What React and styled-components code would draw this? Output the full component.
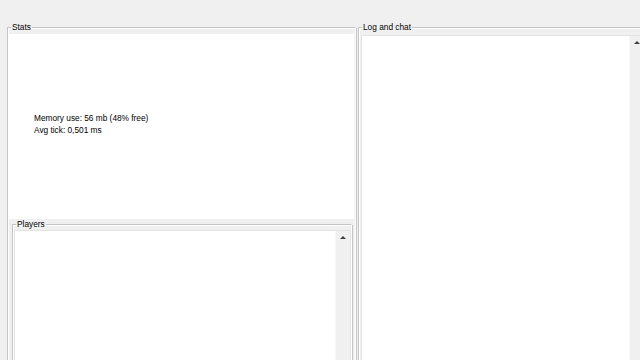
import React from "react";
import styled, { createGlobalStyle } from "styled-components";

const Global = createGlobalStyle`
  html, body { margin: 0; padding: 0; background: #f0f0f0; overflow: hidden; }
  body { font-family: "Liberation Sans", Arial, sans-serif; font-size: 8.3px; color: #000; }
`;

const Page = styled.div`
  display: flex;
  align-items: flex-start;
  gap: 2px;
  width: 660px;
  height: 360px;
  padding: 23px 0 0 7px;
  box-sizing: border-box;
  overflow: hidden;
`;

const Group = styled.fieldset`
  margin: 0;
  padding: 0;
  border-style: solid;
  border-width: 1px;
  border-color: #c4c4c4 #ffffff #ffffff #c4c4c4;
  box-shadow: inset 1px 1px #ffffff, 1px 1px #c4c4c4;
  width: ${(p) => p.$w}px;
  height: ${(p) => p.$h}px;
  box-sizing: border-box;
  min-width: 0;
  display: flex;
  flex-direction: column;
`;

const Legend = styled.legend`
  padding: 0 1px;
  margin-left: 3px;
  font-size: 8.3px;
  line-height: 8px;
  color: #000;
`;

const StatsPanel = styled.div`
  background: #ffffff;
  height: 185px;
  margin: 3px 1px 0 1px;
  display: flex;
  flex-direction: column;
  justify-content: center;
  padding: 0 0 6px 25px;
  box-sizing: border-box;
  line-height: 12px;
`;

const StatLine = styled.div`
  white-space: nowrap;
`;

const PlayersWrap = styled.div`
  padding: 0 3px 0 4px;
  margin-top: 1px;
`;

const ListBox = styled.div`
  display: flex;
  margin: ${(p) => p.$m};
  height: ${(p) => p.$h}px;
  width: ${(p) => (p.$w ? `${p.$w}px` : "auto")};
  border: 1px solid #e3e3e3;
  background: #fff;
`;

const ListArea = styled.div`
  flex: 1;
  background: #fff;
`;

const ScrollBar = styled.div`
  width: ${(p) => p.$w || 14}px;
  background: #f0f0f0;
  border-left: 1px solid #f7f7f7;
  display: flex;
  justify-content: center;
  padding-top: 5px;
  box-sizing: border-box;
`;

const Arrow = styled.div`
  width: 0;
  height: 0;
  border-left: 3px solid transparent;
  border-right: 3px solid transparent;
  border-bottom: 3px solid #404040;
`;

export default function App() {
  return (
    <>
      <Global />
      <Page>
        <Group $w={349} $h={400}>
          <Legend>Stats</Legend>
          <StatsPanel>
            <StatLine>Memory use: 56 mb (48% free)</StatLine>
            <StatLine>Avg tick: 0,501 ms</StatLine>
          </StatsPanel>
          <PlayersWrap>
            <Group $w={340} $h={200}>
              <Legend>Players</Legend>
              <ListBox $h={180} $m="2px 0 0 1px">
                <ListArea />
                <ScrollBar $w={15}>
                  <Arrow />
                </ScrollBar>
              </ListBox>
            </Group>
          </PlayersWrap>
        </Group>
        <Group $w={300} $h={400}>
          <Legend>Log and chat</Legend>
          <ListBox $h={360} $w={281} $m="4px 0 0 2px">
            <ListArea />
            <ScrollBar $w={14}>
              <Arrow />
            </ScrollBar>
          </ListBox>
        </Group>
      </Page>
    </>
  );
}
